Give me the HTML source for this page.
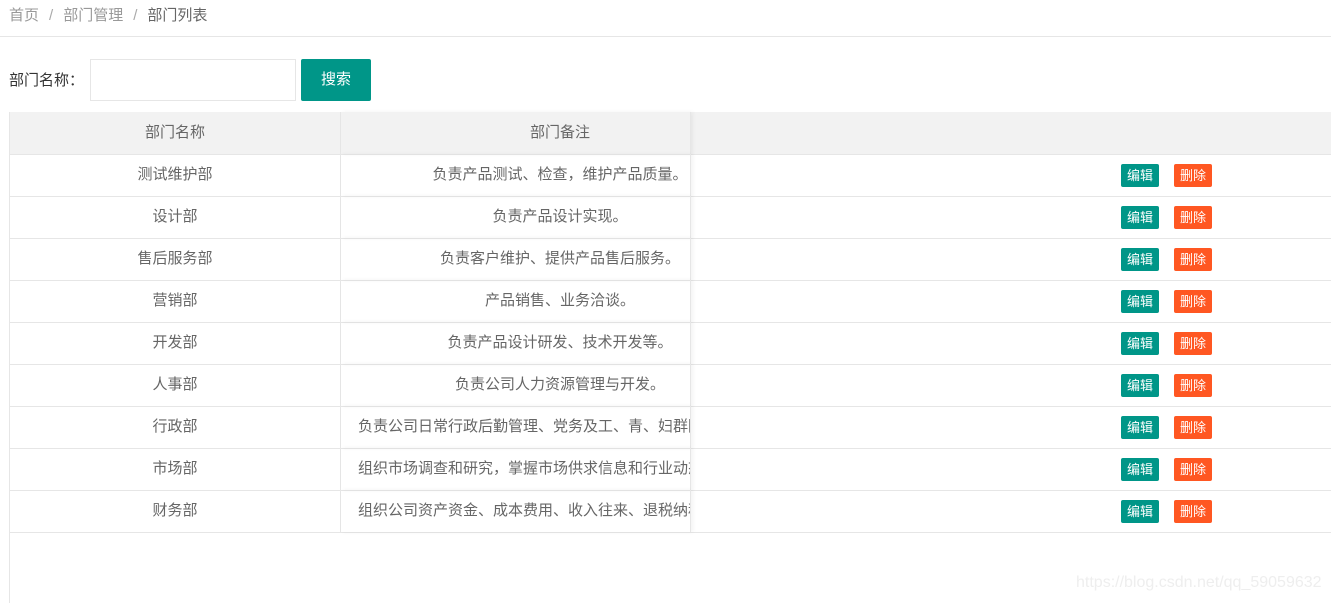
<!DOCTYPE html>
<html><head><meta charset="utf-8"><style>
*{margin:0;padding:0;box-sizing:border-box}
body{width:1331px;height:603px;overflow:hidden;background:#fff;font-family:"Liberation Sans","Noto Sans CJK SC",sans-serif;font-size:15px;color:#666;position:relative}
.bc{position:absolute;left:9px;top:4px;color:#999;font-size:15px}
.bc span.sep{margin:0 10px;color:#aaa}
.bc .cur{color:#666}
.hr{position:absolute;left:0;right:0;top:36px;border-top:1px solid #e6e6e6}
.lbl{position:absolute;left:9px;top:69px;color:#333}
.inp{position:absolute;left:90px;top:59px;width:206px;height:42px;border:1px solid #e6e6e6}
.btn{position:absolute;left:301px;top:59px;width:70px;height:42px;background:#009688;color:#fff;border-radius:2px;text-align:center;line-height:42px}
.tbl{position:absolute;left:9px;top:112px;width:1322px;height:491px;border-left:1px solid #e6e6e6}
.row{position:absolute;left:0;width:1322px;height:43px;border-bottom:1px solid #e6e6e6}
.row.h{background:#f2f2f2}
.c{position:absolute;top:0;height:42px;line-height:42px;white-space:nowrap;overflow:hidden;text-align:center}
.c1{left:0;width:331px;border-right:1px solid #e6e6e6}
.c2{left:331px;width:350px;border-right:1px solid #e6e6e6;box-shadow:2px 0 4px rgba(0,0,0,.05)}
.c2 div{width:438px;padding:0 17px;text-align:center}
.c2.l div{text-align:left}
.b{position:absolute;top:10px;height:23px;width:38px;line-height:23px;color:#fff;font-size:13px;text-align:center;border-radius:2px}
.e{left:1111px;background:#009688}.d{left:1164px;background:#ff5722}
.wm{position:absolute;left:1076px;top:574px;color:#eee;font-size:16px}
</style></head><body>
<div class="bc">首页<span class="sep">/</span>部门管理<span class="sep">/</span><span class="cur">部门列表</span></div>
<div class="hr"></div>
<div class="lbl">部门名称：</div>
<div class="inp"></div>
<div class="btn">搜索</div>
<div class="tbl">
<div class="row h" style="top:0"><div class="c c1">部门名称</div><div class="c c2"><div>部门备注</div></div></div>
<div class="row" style="top:42px"><div class="c c1">测试维护部</div><div class="c c2"><div>负责产品测试、检查，维护产品质量。</div></div><div class="b e">编辑</div><div class="b d">删除</div></div>
<div class="row" style="top:84px"><div class="c c1">设计部</div><div class="c c2"><div>负责产品设计实现。</div></div><div class="b e">编辑</div><div class="b d">删除</div></div>
<div class="row" style="top:126px"><div class="c c1">售后服务部</div><div class="c c2"><div>负责客户维护、提供产品售后服务。</div></div><div class="b e">编辑</div><div class="b d">删除</div></div>
<div class="row" style="top:168px"><div class="c c1">营销部</div><div class="c c2"><div>产品销售、业务洽谈。</div></div><div class="b e">编辑</div><div class="b d">删除</div></div>
<div class="row" style="top:210px"><div class="c c1">开发部</div><div class="c c2"><div>负责产品设计研发、技术开发等。</div></div><div class="b e">编辑</div><div class="b d">删除</div></div>
<div class="row" style="top:252px"><div class="c c1">人事部</div><div class="c c2"><div>负责公司人力资源管理与开发。</div></div><div class="b e">编辑</div><div class="b d">删除</div></div>
<div class="row" style="top:294px"><div class="c c1">行政部</div><div class="c c2 l"><div>负责公司日常行政后勤管理、党务及工、青、妇群团工作。</div></div><div class="b e">编辑</div><div class="b d">删除</div></div>
<div class="row" style="top:336px"><div class="c c1">市场部</div><div class="c c2 l"><div>组织市场调查和研究，掌握市场供求信息和行业动态。</div></div><div class="b e">编辑</div><div class="b d">删除</div></div>
<div class="row" style="top:378px"><div class="c c1">财务部</div><div class="c c2 l"><div>组织公司资产资金、成本费用、收入往来、退税纳税工作。</div></div><div class="b e">编辑</div><div class="b d">删除</div></div>
</div>
<div class="wm">https://blog.csdn.net/qq_59059632</div>
</body></html>
